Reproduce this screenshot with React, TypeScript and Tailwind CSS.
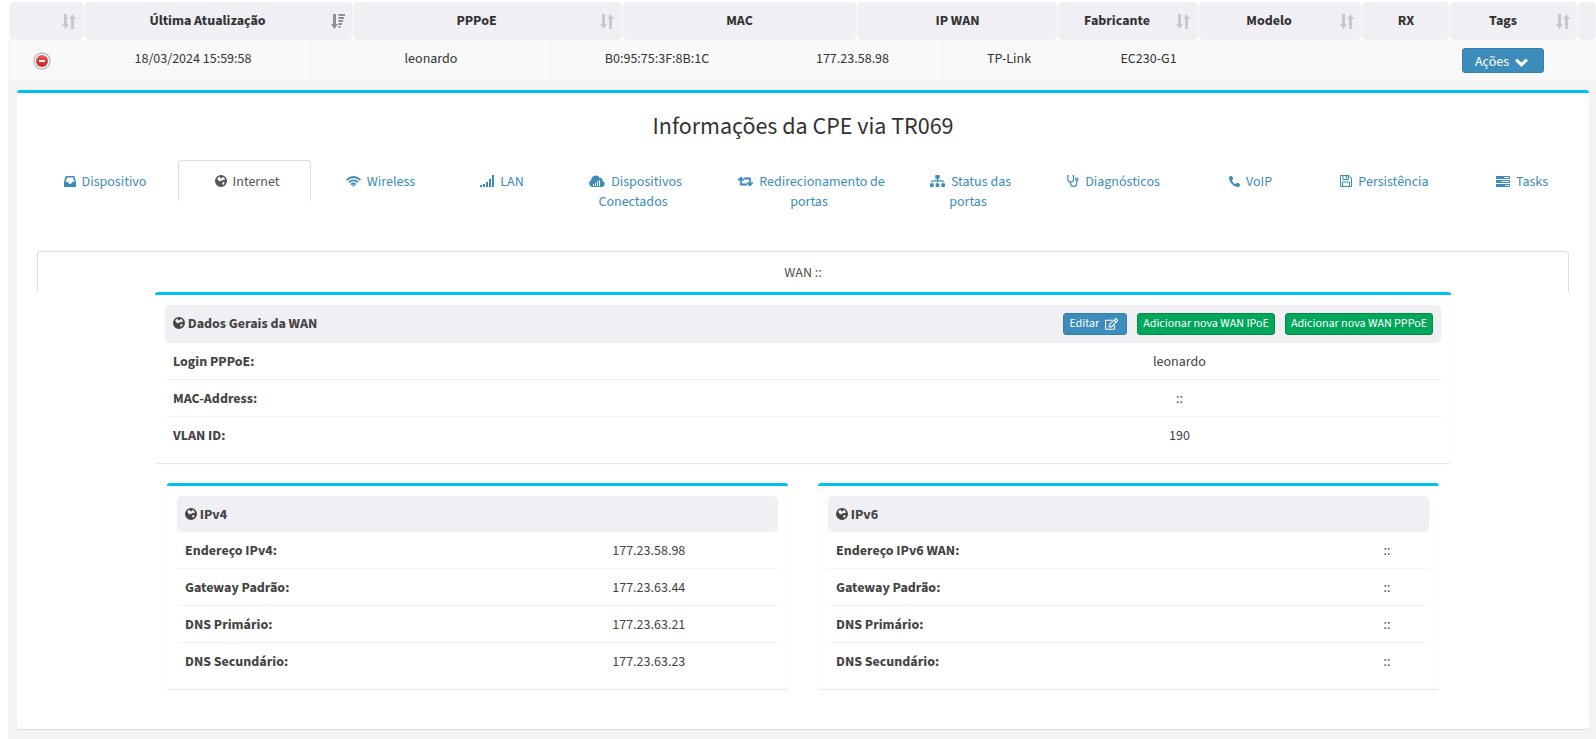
import { useState } from 'react';
import type { ReactNode } from 'react';
import { FaPhoneAlt, FaRegEdit, FaRetweet, FaSitemap } from 'react-icons/fa';

type SortState = 'none' | 'both' | 'desc';

/** Header columns of the device list */
const COLUMNS: { label: string; sort: SortState; width: string }[] = [
  { label: '', sort: 'both', width: 'w-[75px]' },
  { label: 'Última Atualização', sort: 'desc', width: 'w-[269px]' },
  { label: 'PPPoE', sort: 'both', width: 'w-[269px]' },
  { label: 'MAC', sort: 'none', width: 'w-[235px]' },
  { label: 'IP WAN', sort: 'none', width: 'w-[201px]' },
  { label: 'Fabricante', sort: 'both', width: 'w-[140px]' },
  { label: 'Modelo', sort: 'both', width: 'w-[164px]' },
  { label: 'RX', sort: 'none', width: 'w-[88px]' },
  { label: 'Tags', sort: 'both', width: 'w-[128px]' },
  { label: '', sort: 'none', width: 'w-[18px]' },
];

/** Cells between the toggle and the actions button */
const DEVICE = [
  { value: '18/03/2024 15:59:58', width: 'w-[235px]' },
  { value: 'leonardo', width: 'w-[241px]' },
  { value: 'B0:95:75:3F:8B:1C', width: 'w-[211px]' },
  { value: '177.23.58.98', width: 'w-[180px]' },
  { value: 'TP-Link', width: 'w-[133px]' },
  { value: 'EC230-G1', width: 'w-[146px]' },
  { value: '', width: 'w-[77px]' },
  { value: '', width: 'w-[115px]' },
];

const TABS: { label: string; icon: ReactNode }[] = [
  { label: 'Dispositivo', icon: <InboxIcon /> },
  { label: 'Internet', icon: <GlobeIcon /> },
  { label: 'Wireless', icon: <WifiIcon /> },
  { label: 'LAN', icon: <SignalIcon /> },
  { label: 'Dispositivos Conectados', icon: <CloudIcon /> },
  { label: 'Redirecionamento de portas', icon: <FaRetweet className="inline-block h-[15px] w-[15px] stroke-current stroke-[24px] align-[-3px]" /> },
  { label: 'Status das portas', icon: <FaSitemap className="inline-block h-[14px] w-[15px] align-[-2px]" /> },
  { label: 'Diagnósticos', icon: <StethoscopeIcon /> },
  { label: 'VoIP', icon: <FaPhoneAlt className="inline-block h-[11px] w-[11px] align-[-1px]" /> },
  { label: 'Persistência', icon: <FloppyIcon /> },
  { label: 'Tasks', icon: <TasksIcon /> },
];

const WAN_ROWS = [
  ['Login PPPoE:', 'leonardo'],
  ['MAC-Address:', '::'],
  ['VLAN ID:', '190'],
];

const IPV4_ROWS = [
  ['Endereço IPv4:', '177.23.58.98'],
  ['Gateway Padrão:', '177.23.63.44'],
  ['DNS Primário:', '177.23.63.21'],
  ['DNS Secundário:', '177.23.63.23'],
];

const IPV6_ROWS = [
  ['Endereço IPv6 WAN:', '::'],
  ['Gateway Padrão:', '::'],
  ['DNS Primário:', '::'],
  ['DNS Secundário:', '::'],
];

function GlobeIcon() {
  return (
    <svg className="inline-block h-[12px] w-[12px] align-[-1px]" viewBox="0 0 12 12" fill="currentColor">
      <path
        fillRule="evenodd"
        d="M6 0a6 6 0 1 1 0 12A6 6 0 0 1 6 0zM2.2 3.6L3.6 2 5 1.8 4.8 2.8 6.2 3.4 7.4 2 9 2.4 10 4.200 9 5.200 7.800 4.800 6.600 5.800 5.500 5.500 5.300 6.600 4.300 6.200 3 5zM7.200 7.500L8.200 7 9.600 7.500 9.200 8.800 8 9.900 7.400 8.900z"
      />
    </svg>
  );
}

function InboxIcon() {
  return (
    <svg className="inline-block h-[11px] w-[12px] align-[-1px]" viewBox="0 0 12 11" fill="currentColor">
      <path fillRule="evenodd" d="M2.2 0h7.6q.5 0 .7.5L12 6v4.4q0 .6-.6.6H.6Q0 11 0 10.4V6L1.5.5Q1.7 0 2.2 0zM3 1.5L1.7 6h2.3l.8 1.8h2.4L8 6h2.3L9 1.5z" />
    </svg>
  );
}

function WifiIcon() {
  return (
    <svg className="inline-block h-[11px] w-[15px] align-[-1px]" viewBox="0 0 15 11" fill="none" stroke="currentColor" strokeWidth="1.7">
      <path d="M.6 4Q7.5-2 14.4 4M2.9 6.3Q7.5 2.3 12.1 6.3M5 8.6Q7.5 6.4 10 8.6" />
      <path d="M6 9.3h3L7.5 11z" fill="currentColor" stroke="none" />
    </svg>
  );
}

function SignalIcon() {
  return (
    <svg className="inline-block h-[12px] w-[14px] align-[-1px]" viewBox="0 0 14 12" fill="currentColor">
      <path d="M0 10h2v2H0zM3 9h2v3H3zM6 7h2v5H6zM9 4h2v8H9zM12 0h2v12h-2z" />
    </svg>
  );
}

function CloudIcon() {
  return (
    <svg className="inline-block h-[12px] w-[16px] align-[-1px]" viewBox="0 0 16 12" fill="currentColor">
      <path
        fillRule="evenodd"
        d="M3.600 12A3.600 3.600 0 0 1 2.300 5.100 4.500 4.500 0 0 1 10.700 2.900 2.300 2.300 0 0 1 13.400 5.900 3.100 3.100 0 0 1 13 12zM4 9v2h1V9zM6 8v3h1V8zM8 6v5h1V6zM10 5v6h1V5z"
      />
    </svg>
  );
}

function StethoscopeIcon() {
  return (
    <svg className="inline-block h-[12px] w-[12px] align-[-1px]" viewBox="0 0 12 12" fill="none" stroke="currentColor" strokeWidth="1.200">
      <path d="M2 .8H.8V4q0 3 2.900 3T6.600 4V.8H5.400M3.700 7v1.500q0 2.900 3 2.900t3-2.900V5.600" />
      <circle cx="9.800" cy="4.400" r="1.200" />
    </svg>
  );
}

function FloppyIcon() {
  return (
    <svg className="inline-block h-[12px] w-[12px] align-[-1px]" viewBox="0 0 12 12" fill="none" stroke="currentColor">
      <path d="M.5.5h8.500l2.500 2.500v8.500H.5zM3 .5v4h5.500v-4M2.500 11.500v-4.500h7v4.500" />
      <path d="M6.500 1v2.500" strokeWidth="1.500" />
    </svg>
  );
}

function TasksIcon() {
  return (
    <svg className="inline-block h-[11px] w-[14px] align-[-1px]" viewBox="0 0 14 11" fill="currentColor">
      <path fillRule="evenodd" d="M0 0h14v3H0zM8.500 1v1H13V1zM0 4h14v3H0zM5.500 5v1H13V5zM0 8h14v3H0zM9.500 9v1H13V9z" />
    </svg>
  );
}

function ChevronDownIcon() {
  return (
    <svg className="h-[9px] w-[13px]" viewBox="0 0 13 9" fill="currentColor">
      <path d="M2.200.5L6.500 4.500 10.800.5 13 2.700 6.500 9 0 2.700z" />
    </svg>
  );
}

function SortIcon({ state }: { state: SortState }) {
  if (state === 'none') return null;
  return (
    <svg
      className={`h-[15px] w-[14px] shrink-0 ${state === 'desc' ? 'text-[#8f8f92]' : 'text-[#c9c9cd]'}`}
      viewBox="0 0 14 15"
      fill="currentColor"
    >
      <path d="M2 0h3v10h2L3.500 15 0 10h2z" />
      {state === 'desc' ? (
        <path d="M7.500 0H14v2H7.500zM7.500 3H13v2H7.500zM7.500 6H12v2H7.500zM7.500 9H11v2H7.500zM7.500 12H9.500v2H7.500z" />
      ) : (
        <path d="M9 15h3V5h2L10.500 0 7 5H9z" />
      )}
    </svg>
  );
}

function CollapseIcon() {
  return (
    <svg className="h-[18px] w-[18px]" viewBox="0 0 18 18">
      <defs>
        <linearGradient id="collapse-red" x1="0" y1="0" x2="0" y2="1">
          <stop offset="0" stopColor="#e8605c" />
          <stop offset="0.5" stopColor="#dd3535" />
          <stop offset="1" stopColor="#c92a2a" />
        </linearGradient>
      </defs>
      <circle cx="9" cy="9" r="8" fill="#fff" stroke="#bdbdbd" strokeWidth="1.500" />
      <circle cx="9" cy="9" r="6" fill="url(#collapse-red)" />
      <rect x="6" y="8" width="6" height="2" fill="#fff" />
    </svg>
  );
}

function Box({ children }: { children: ReactNode }) {
  return (
    <section className="rounded-[3px] border-t-3 border-[#00c0ef] bg-white p-2.5 shadow-[0_1px_1px_rgba(0,0,0,0.1)]">
      {children}
    </section>
  );
}

/** Label / value table under a grey title strip */
function InfoTable({
  title,
  rows,
  labelCol,
  actions,
}: {
  title: string;
  rows: string[][];
  labelCol: string;
  actions?: ReactNode;
}) {
  return (
    <table className="w-full table-fixed border-separate border-spacing-0">
      <colgroup>
        <col className={labelCol} />
        <col />
      </colgroup>
      <thead>
        <tr>
          <th colSpan={2} className={`rounded-[5px] bg-[#efeff4] px-2 text-left font-bold ${actions ? 'py-2' : 'pt-[9px] pb-[7px]'}`}>
            <div className="flex items-center justify-between">
              <span>
                <GlobeIcon /> {title}
              </span>
              {actions}
            </div>
          </th>
        </tr>
      </thead>
      <tbody>
        {rows.map(([label, value], i) => (
          <tr key={label}>
            <th
              scope="row"
              className={`px-2 pt-[9px] pb-[7px] text-left font-bold ${i > 0 ? 'border-t border-[#f4f4f4]' : ''}`}
            >
              {label}
            </th>
            <td className={`px-2 pt-[9px] pb-[7px] text-center ${i > 0 ? 'border-t border-[#f4f4f4]' : ''}`}>{value}</td>
          </tr>
        ))}
      </tbody>
    </table>
  );
}

export default function App() {
  const [activeTab, setActiveTab] = useState('Internet');
  const [open, setOpen] = useState(true);

  return (
    <div className="flex min-h-screen flex-col bg-white pt-0.5 pl-2 font-['Source_Sans_Pro','Source_Sans_3',serif] text-[14px] leading-[20px] text-[#333]">
      {/* Column headers */}
      <div className="pl-px">
        <table className="w-full table-fixed border-separate border-spacing-0">
          <colgroup>
            {COLUMNS.map((col, i) => (
              <col key={i} className={col.width} />
            ))}
          </colgroup>
          <thead>
            <tr>
              {COLUMNS.map((col, i) => (
                <th key={i} className="h-[38px] rounded-[5px] border-x border-[#f4f4f4] bg-[#efeff4] px-[7px] py-0 font-bold">
                  <div className="flex items-center gap-2">
                    <span className="flex-1 text-center">{col.label}</span>
                    <SortIcon state={col.sort} />
                  </div>
                </th>
              ))}
            </tr>
          </thead>
        </table>
      </div>

      <div className="flex-1 border-l border-[#f4f4f4] bg-[#f4f4f4]">
        {/* Device row */}
        <table className="w-full table-fixed border-separate border-spacing-0 bg-[#f9f9f9]">
          <colgroup>
            <col className="w-[67px]" />
            {DEVICE.map((cell, i) => (
              <col key={i} className={cell.width} />
            ))}
            <col className="w-[182px]" />
          </colgroup>
          <tbody>
            <tr>
              <td className="border-r border-[#f4f4f4] p-0 align-middle">
                <button
                  type="button"
                  aria-label="Detalhes"
                  aria-expanded={open}
                  onClick={() => setOpen(!open)}
                  className="mx-auto block cursor-pointer"
                >
                  <CollapseIcon />
                </button>
              </td>
              {DEVICE.map((cell, i) => (
                <td key={i} className="border-r border-[#f4f4f4] px-2 pt-[9px] pb-[7px] text-center align-top">
                  {cell.value}
                </td>
              ))}
              <td className="py-2 pr-1">
                <button
                  type="button"
                  className="mx-auto flex cursor-pointer items-center gap-1.5 rounded-[3px] border border-[#367fa9] bg-[#3c8dbc] pt-[3px] pr-[15px] pl-3 text-white"
                >
                  Ações
                  <ChevronDownIcon />
                </button>
              </td>
            </tr>
          </tbody>
        </table>

        {/* Expanded details */}
        {open && (
          <div className="pt-[9px] pr-[7px] pb-[9px] pl-2">
            <Box>
              <h3 className="pt-[11px] text-center text-[24px] leading-[26px]">Informações da CPE via TR069</h3>

              <nav className="mt-5 grid grid-cols-[151fr_133fr_134fr_109fr_158fr_194fr_124fr_162fr_112fr_156fr_119fr] items-start">
                {TABS.map((tab) => (
                  <a
                    key={tab.label}
                    href="#"
                    onClick={(e) => {
                      e.preventDefault();
                      setActiveTab(tab.label);
                    }}
                    className={`rounded-t-[4px] border border-b-0 px-[15px] pt-[11px] pb-[9px] text-center ${
                      activeTab === tab.label ? 'border-[#ddd] text-[#555]' : 'border-transparent text-[#3c8dbc]'
                    }`}
                  >
                    <span className="mr-1.5 ml-[5px]">{tab.icon}</span>
                    {tab.label}
                  </a>
                ))}
              </nav>

              <div className="mx-2.5 mt-[30px]">
                <a
                  href="#"
                  onClick={(e) => e.preventDefault()}
                  className="block rounded-t-[4px] border border-b-0 border-[#ddd] pt-[11px] pb-[9px] text-center text-[#555]"
                >
                  WAN ::
                </a>
              </div>

              <div className="px-32 pb-[30px] text-[#444]">
                <Box>
                  <InfoTable
                    title="Dados Gerais da WAN"
                    rows={WAN_ROWS}
                    labelCol="w-[59%]"
                    actions={
                      <div className="flex gap-2.5 text-[12px] leading-[18px] font-normal text-white">
                        <button
                          type="button"
                          className="flex cursor-pointer items-center gap-1.5 rounded-[3px] border border-[#367fa9] bg-[#3c8dbc] py-px pr-2 pl-[5px]"
                        >
                          Editar
                          <FaRegEdit className="h-[12px] w-[13px]" />
                        </button>
                        <button
                          type="button"
                          className="cursor-pointer rounded-[3px] border border-[#008d4c] bg-[#00a65a] px-[5px] py-px"
                        >
                          Adicionar nova WAN IPoE
                        </button>
                        <button
                          type="button"
                          className="cursor-pointer rounded-[3px] border border-[#008d4c] bg-[#00a65a] px-[5px] py-px"
                        >
                          Adicionar nova WAN PPPoE
                        </button>
                      </div>
                    }
                  />
                </Box>
                <div className="mt-5 grid grid-cols-2 gap-[30px] px-3">
                  <Box>
                    <InfoTable title="IPv4" rows={IPV4_ROWS} labelCol="w-[57%]" />
                  </Box>
                  <Box>
                    <InfoTable title="IPv6" rows={IPV6_ROWS} labelCol="w-[86%]" />
                  </Box>
                </div>
              </div>
            </Box>
          </div>
        )}
      </div>
    </div>
  );
}
